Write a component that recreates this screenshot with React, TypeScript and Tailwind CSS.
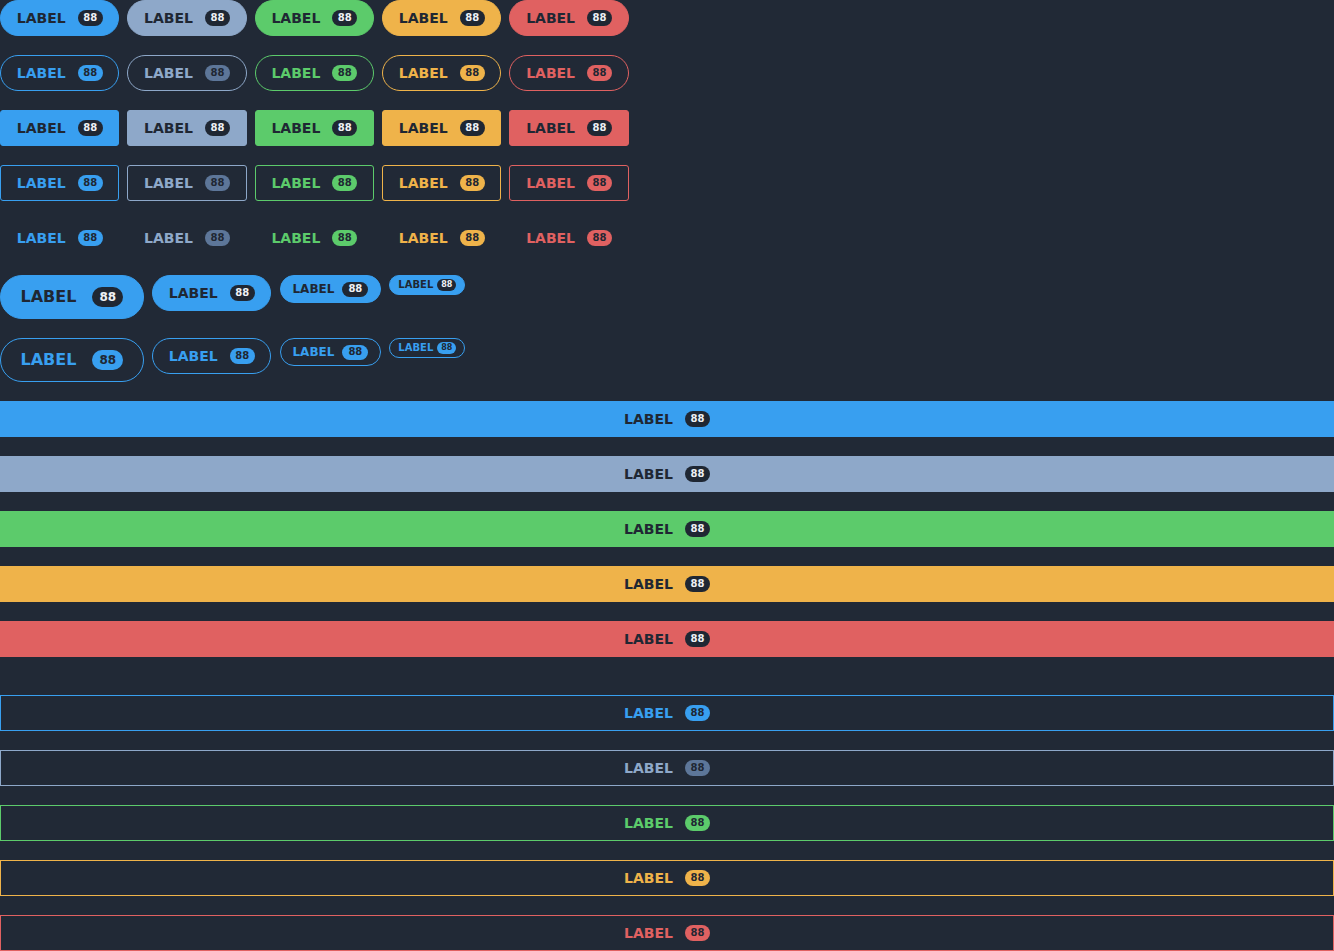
import React from "react";

type Color = "blue" | "slate" | "green" | "orange" | "red";
type Variant = "filled" | "outline" | "ghost";
type Shape = "pill" | "rect";
type Size = "lg" | "md" | "sm" | "xs";

const filledCls: Record<Color, string> = {
  blue: "bg-[#389ff0] border-[#389ff0] text-[#1f2733]",
  slate: "bg-[#8ea8c9] border-[#8ea8c9] text-[#1f2733]",
  green: "bg-[#5ccb6b] border-[#5ccb6b] text-[#1f2733]",
  orange: "bg-[#efb34a] border-[#efb34a] text-[#1f2733]",
  red: "bg-[#e06161] border-[#e06161] text-[#1f2733]",
};

const outlineCls: Record<Color, string> = {
  blue: "bg-transparent border-[#389ff0] text-[#389ff0]",
  slate: "bg-transparent border-[#8ea8c9] text-[#8ea8c9]",
  green: "bg-transparent border-[#5ccb6b] text-[#5ccb6b]",
  orange: "bg-transparent border-[#efb34a] text-[#efb34a]",
  red: "bg-transparent border-[#e06161] text-[#e06161]",
};

const ghostCls: Record<Color, string> = {
  blue: "bg-transparent border-transparent text-[#389ff0]",
  slate: "bg-transparent border-transparent text-[#8ea8c9]",
  green: "bg-transparent border-transparent text-[#5ccb6b]",
  orange: "bg-transparent border-transparent text-[#efb34a]",
  red: "bg-transparent border-transparent text-[#e06161]",
};

const lightBadgeCls: Record<Color, string> = {
  blue: "bg-[#389ff0] text-[#1f2733]",
  slate: "bg-[#5d7699] text-[#1f2733]",
  green: "bg-[#5ccb6b] text-[#1f2733]",
  orange: "bg-[#efb34a] text-[#1f2733]",
  red: "bg-[#e06161] text-[#1f2733]",
};

const sizeCls: Record<Size, string> = {
  lg: "h-[44px] px-[19.5px] gap-[16px] text-[16px]",
  md: "h-[36px] px-[15.75px] gap-[12px] text-[14px]",
  sm: "h-[28px] px-[11.5px] gap-[8px] text-[12px]",
  xs: "h-[20px] px-[8px] gap-[4px] text-[10px]",
};

const badgeSizeCls: Record<Size, string> = {
  lg: "h-[20px] px-[7px] text-[12px]",
  md: "h-[16px] px-[5.5px] text-[10px]",
  sm: "h-[15px] px-[6px] text-[10px]",
  xs: "h-[12px] px-[4px] text-[8px]",
};

function Btn({
  color,
  variant,
  shape = "pill",
  size = "md",
  full = false,
}: {
  color: Color;
  variant: Variant;
  shape?: Shape;
  size?: Size;
  full?: boolean;
}) {
  const vc =
    variant === "filled"
      ? filledCls[color]
      : variant === "outline"
      ? outlineCls[color]
      : ghostCls[color];
  const radius = full ? "rounded-none" : shape === "pill" ? "rounded-full" : "rounded-[3px]";
  const badge =
    variant === "filled" ? "bg-[#1f2733] text-[#eef1f5]" : lightBadgeCls[color];
  return (
    <div
      className={`${full ? "flex w-full" : "inline-flex"} shrink-0 items-center justify-center border border-solid font-bold leading-none ${radius} ${vc} ${sizeCls[size]}`}
    >
      <span>LABEL</span>
      <span
        className={`inline-flex items-center justify-center rounded-full font-bold leading-none ${badge} ${badgeSizeCls[size]}`}
      >
        88
      </span>
    </div>
  );
}

const colors: Color[] = ["blue", "slate", "green", "orange", "red"];

export default function App() {
  return (
    <div
      className="min-h-[951px] w-full bg-[#212936] flex flex-col gap-[19px]"
      style={{ fontFamily: '"DejaVu Sans", "Liberation Sans", sans-serif' }}
    >
      <div className="flex gap-[8px]">
        {colors.map((c) => (
          <Btn key={c} color={c} variant="filled" shape="pill" />
        ))}
      </div>
      <div className="flex gap-[8px]">
        {colors.map((c) => (
          <Btn key={c} color={c} variant="outline" shape="pill" />
        ))}
      </div>
      <div className="flex gap-[8px]">
        {colors.map((c) => (
          <Btn key={c} color={c} variant="filled" shape="rect" />
        ))}
      </div>
      <div className="flex gap-[8px]">
        {colors.map((c) => (
          <Btn key={c} color={c} variant="outline" shape="rect" />
        ))}
      </div>
      <div className="flex gap-[8px]">
        {colors.map((c) => (
          <Btn key={c} color={c} variant="ghost" shape="rect" />
        ))}
      </div>
      <div className="flex items-start gap-[8.5px]">
        <Btn color="blue" variant="filled" size="lg" />
        <Btn color="blue" variant="filled" size="md" />
        <Btn color="blue" variant="filled" size="sm" />
        <Btn color="blue" variant="filled" size="xs" />
      </div>
      <div className="flex items-start gap-[8.5px]">
        <Btn color="blue" variant="outline" size="lg" />
        <Btn color="blue" variant="outline" size="md" />
        <Btn color="blue" variant="outline" size="sm" />
        <Btn color="blue" variant="outline" size="xs" />
      </div>
      {colors.map((c) => (
        <Btn key={"f" + c} color={c} variant="filled" full />
      ))}
      <div className="h-0" />
      {colors.map((c) => (
        <Btn key={"o" + c} color={c} variant="outline" full />
      ))}
    </div>
  );
}
